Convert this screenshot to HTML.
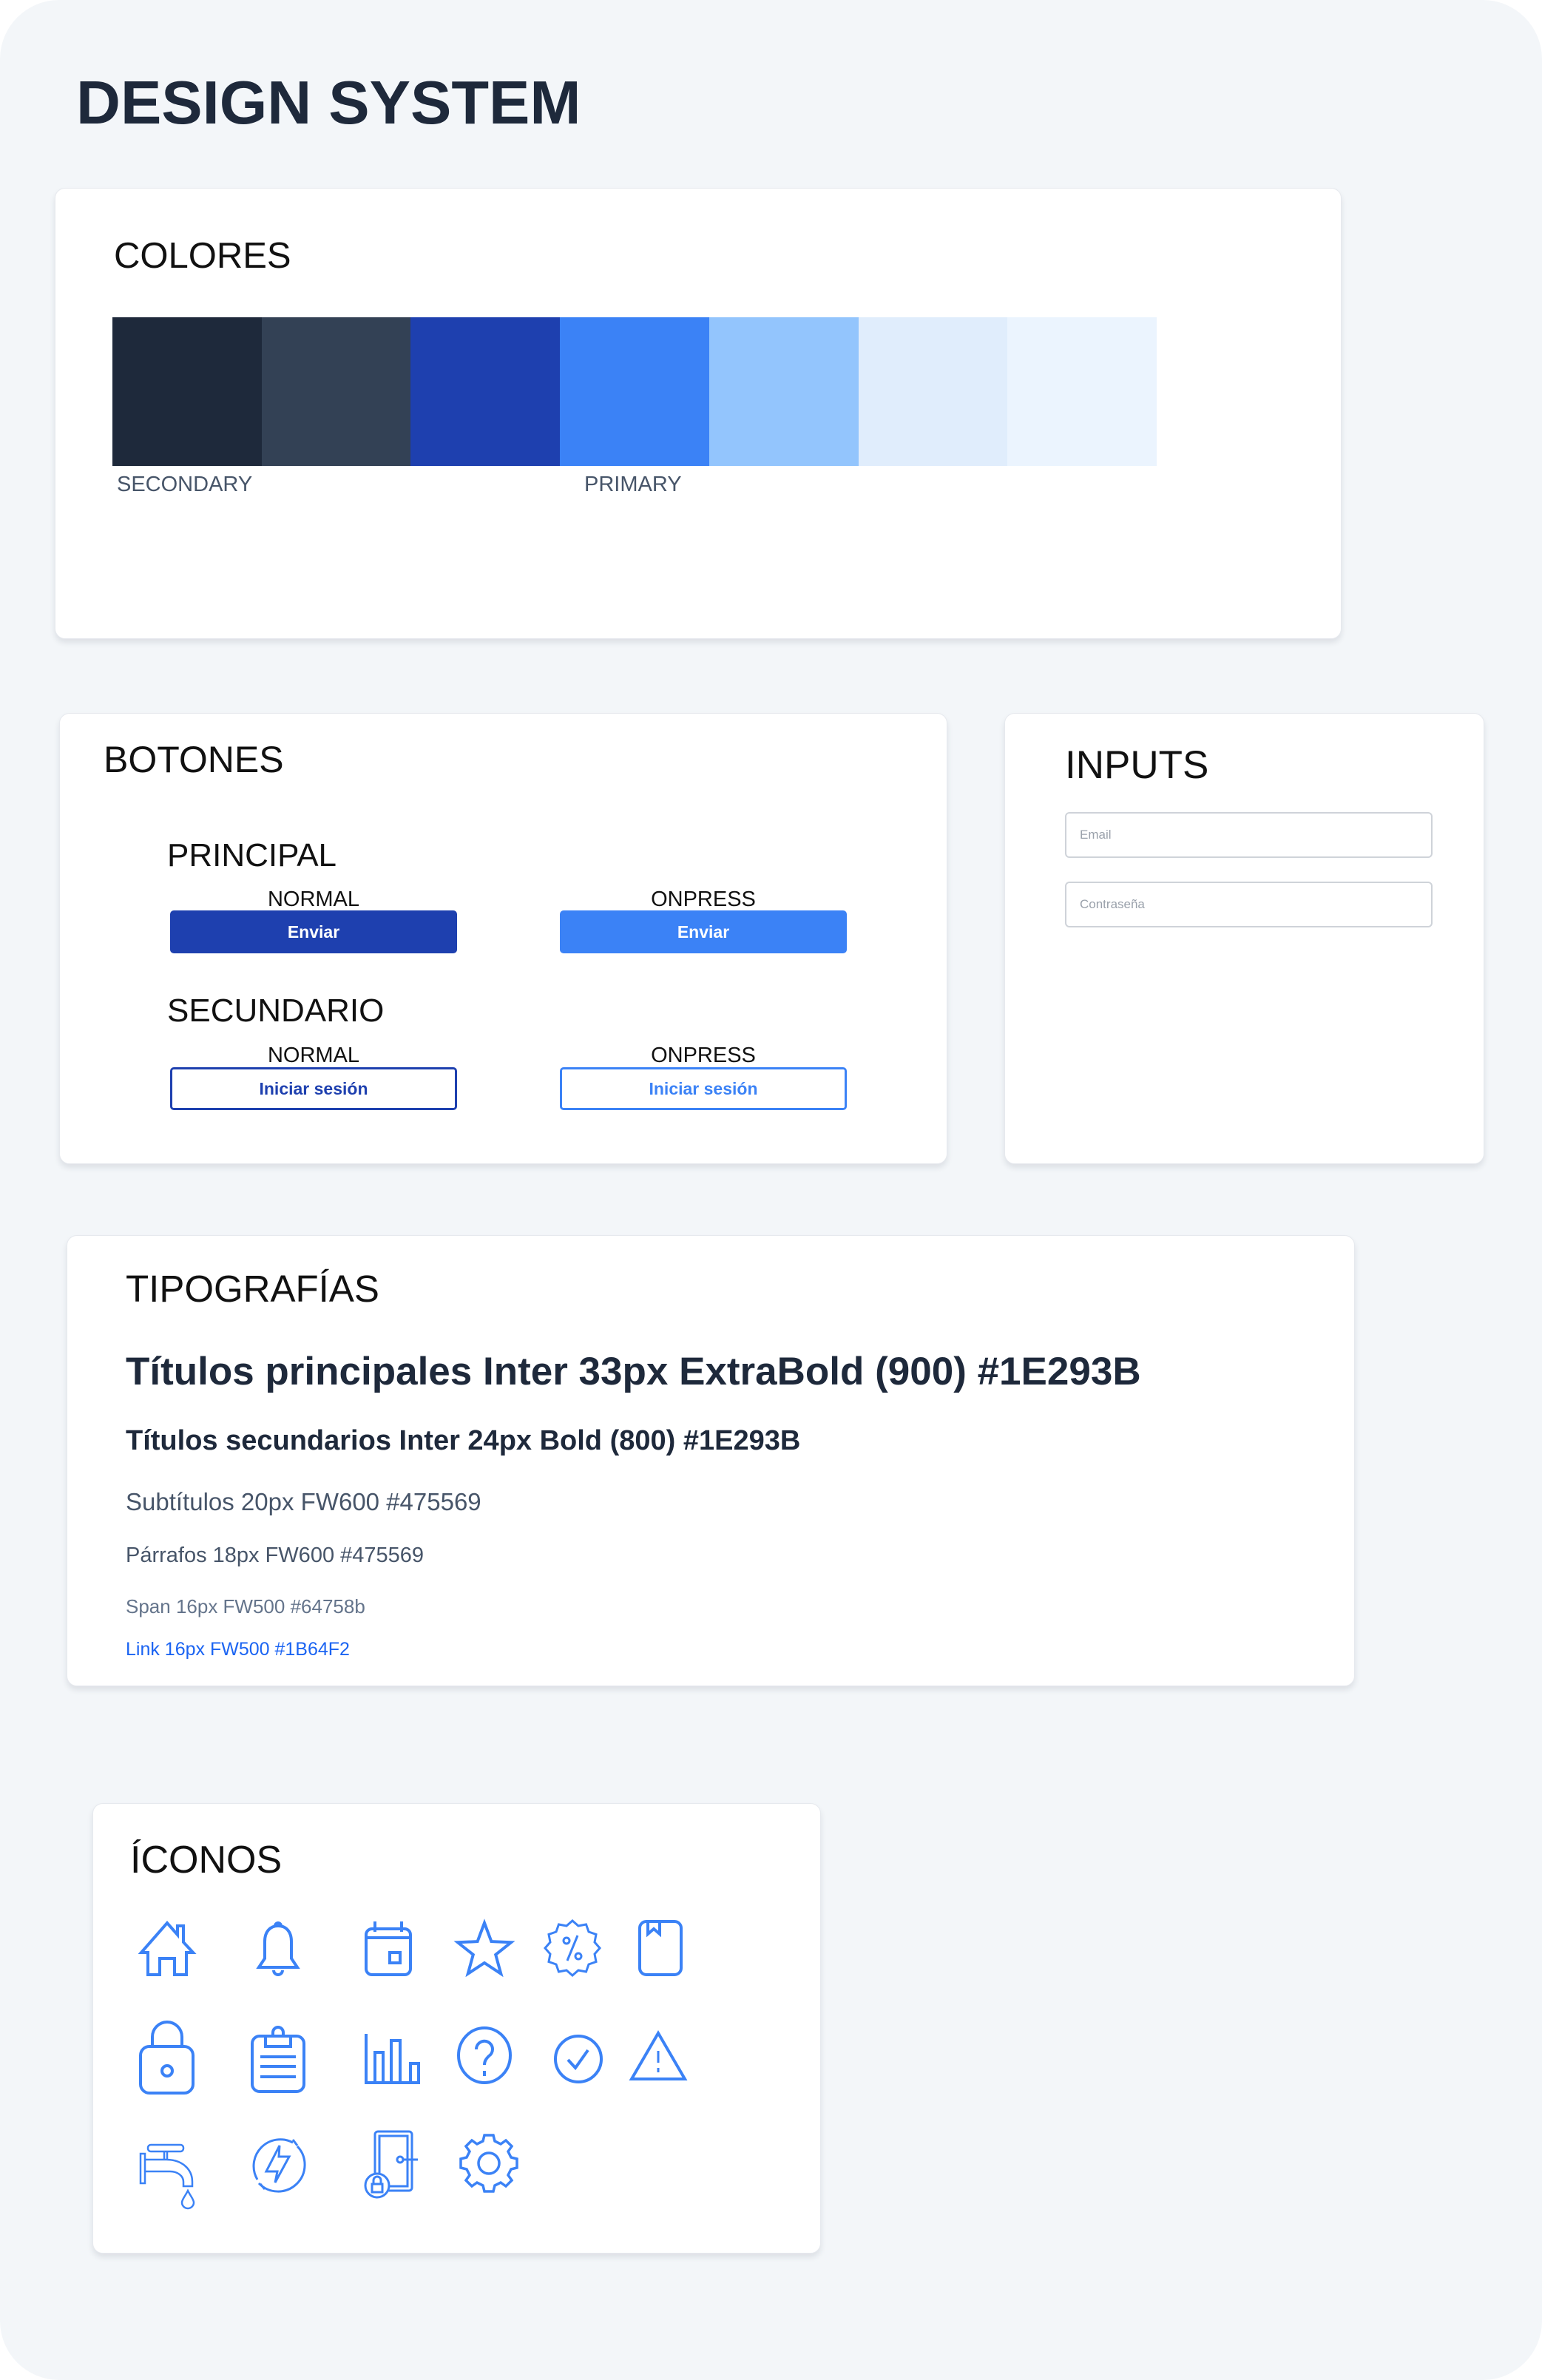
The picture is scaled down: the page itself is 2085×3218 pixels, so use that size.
<!DOCTYPE html>
<html><head><meta charset="utf-8"><style>
*{margin:0;padding:0;box-sizing:border-box}
body{width:2085px;height:3218px;background:#fff;font-family:"Liberation Sans",sans-serif;position:relative;overflow:hidden}
.page{position:absolute;left:0;top:0;width:2085px;height:3218px;background:#f3f6f9;border-radius:80px}
.card{position:absolute;background:#fff;border-radius:14px;border:1px solid #e6e9ee;box-shadow:0 5px 8px rgba(30,41,59,.10)}
.t{position:absolute;line-height:1;white-space:nowrap}
.h{font-size:50px;color:#111}
.btn{position:absolute;width:388px;height:58px;border-radius:5px;font-weight:bold;font-size:23px;display:flex;align-items:center;justify-content:center}
.lbl{position:absolute;font-size:29px;color:#111;line-height:1;width:388px;text-align:center}
.inp{position:absolute;left:1440px;width:497px;height:62px;border:2px solid #cfd3d9;border-radius:6px;font-size:17px;color:#9aa1ab;padding-left:18px;display:flex;align-items:center}
</style></head><body>
<div class="page"></div>
<div class="t" style="left:103px;top:97px;font-size:83px;font-weight:bold;color:#1e293b">DESIGN SYSTEM</div>

<div class="card" style="left:74px;top:254px;width:1740px;height:610px"></div>
<div class="t h" style="left:154px;top:322px;font-size:49px">COLORES</div>
<div style="position:absolute;left:152px;top:429px;height:201px;width:1412px;display:flex">
<div style="flex:1;background:#1e293b"></div><div style="flex:1;background:#334155"></div><div style="flex:1;background:#1e40af"></div><div style="flex:1;background:#3b82f6"></div><div style="flex:1;background:#93c5fd"></div><div style="flex:1;background:#e0edfc"></div><div style="flex:1;background:#ebf4fe"></div>
</div>
<div class="t" style="left:158px;top:641px;font-size:29px;color:#475569">SECONDARY</div>
<div class="t" style="left:790px;top:641px;font-size:29px;color:#475569">PRIMARY</div>

<div class="card" style="left:80px;top:964px;width:1201px;height:610px"></div>
<div class="t h" style="left:140px;top:1002px">BOTONES</div>
<div class="t" style="left:226px;top:1135px;font-size:44px;color:#111">PRINCIPAL</div>
<div class="lbl" style="left:230px;top:1202px">NORMAL</div>
<div class="lbl" style="left:757px;top:1202px">ONPRESS</div>
<div class="btn" style="left:230px;top:1231px;background:#1e40af;color:#fff">Enviar</div>
<div class="btn" style="left:757px;top:1231px;background:#3b82f6;color:#fff">Enviar</div>
<div class="t" style="left:226px;top:1345px;font-size:44px;color:#111">SECUNDARIO</div>
<div class="lbl" style="left:230px;top:1413px">NORMAL</div>
<div class="lbl" style="left:757px;top:1413px">ONPRESS</div>
<div class="btn" style="left:230px;top:1443px;border:3px solid #1e40af;color:#1e40af;background:#fff">Iniciar sesión</div>
<div class="btn" style="left:757px;top:1443px;border:3px solid #3b82f6;color:#3b82f6;background:#fff">Iniciar sesión</div>

<div class="card" style="left:1358px;top:964px;width:649px;height:610px"></div>
<div class="t" style="left:1440px;top:1008px;font-size:53px;color:#111">INPUTS</div>
<div class="inp" style="top:1098px">Email</div>
<div class="inp" style="top:1192px">Contraseña</div>

<div class="card" style="left:90px;top:1670px;width:1742px;height:610px"></div>
<div class="t h" style="left:170px;top:1717px;font-size:51px">TIPOGRAFÍAS</div>
<div class="t" style="left:170px;top:1828px;font-size:53px;font-weight:bold;color:#1e293b">Títulos principales Inter 33px ExtraBold (900) #1E293B</div>
<div class="t" style="left:170px;top:1929px;font-size:38px;font-weight:bold;color:#1e293b">Títulos secundarios Inter 24px Bold (800) #1E293B</div>
<div class="t" style="left:170px;top:2014px;font-size:33px;color:#475569">Subtítulos 20px FW600 #475569</div>
<div class="t" style="left:170px;top:2089px;font-size:29px;color:#475569">Párrafos 18px FW600 #475569</div>
<div class="t" style="left:170px;top:2159px;font-size:26px;color:#64748b">Span 16px FW500 #64758b</div>
<div class="t" style="left:170px;top:2218px;font-size:25px;color:#1b64f2">Link 16px FW500 #1B64F2</div>

<div class="card" style="left:125px;top:2438px;width:985px;height:609px"></div>
<div class="t" style="left:176px;top:2489px;font-size:52px;color:#111">ÍCONOS</div>

<svg style="position:absolute;left:0;top:0" width="2085" height="3218" fill="none" stroke="#3b82f6" stroke-width="4" stroke-linejoin="miter">
<path d="M200 2670 V2640 H191 L226 2600 L240 2616 V2604 H248 V2626 L261 2640 H252 V2670 H236 V2648 H216 V2670 Z"/>
<path d="M372 2604 a4 4 0 0 1 8 0"/>
<path d="M350 2660 L358 2648 V2625 C358 2611 366 2604 376 2604 C386 2604 394 2611 394 2625 V2648 L402 2660 Z"/>
<path d="M370 2664 a6 6 0 0 0 12 0"/>
<rect x="495" y="2608" width="60" height="62" rx="8"/>
<path d="M507 2598 V2612 M543 2598 V2612 M495 2620 H555"/>
<rect x="527" y="2640" width="14" height="14"/>
<polygon points="655,2600 664.4,2625.1 691.1,2626.3 670.2,2642.9 677.3,2668.7 655,2654 632.7,2668.7 639.8,2642.9 618.9,2626.3 645.6,2625.1"/>
<polygon stroke-width="3" points="811,2634 804,2642 806,2652.5 796,2656 792.5,2666 782,2664 774,2671 766,2664 755.5,2666 752,2656 742,2652.5 744,2642 737,2634 744,2626 742,2615.5 752,2612 755.5,2602 766,2604 774,2597 782,2604 792.5,2602 796,2612 806,2615.5 804,2626"/>
<path stroke-width="3" d="M767 2651 L781 2617"/>
<circle stroke-width="3" cx="766" cy="2624" r="4"/>
<circle stroke-width="3" cx="782" cy="2645" r="4"/>
<rect x="865" y="2598" width="56" height="72" rx="9"/>
<path d="M876 2598 V2615 L884 2608 L892 2615 V2598"/>
<path d="M206 2768 V2754 a20 20 0 0 1 40 0 V2768"/>
<rect x="190" y="2767" width="71" height="63" rx="12"/>
<circle cx="226" cy="2800" r="7"/>
<rect x="341" y="2753" width="70" height="75" rx="10"/>
<path d="M359 2753 V2767 H393 V2753 M369 2753 V2748 a7 7 0 0 1 14 0 V2753"/>
<path d="M352 2781 H400 M352 2794 H400 M352 2808 H400"/>
<path d="M495 2750 V2816 H568"/>
<rect x="507" y="2775" width="11" height="41"/>
<rect x="529" y="2759" width="12" height="57"/>
<rect x="555" y="2790" width="11" height="26"/>
<ellipse cx="655" cy="2779" rx="35" ry="37"/>
<path d="M644 2771 a11 11 0 1 1 17 9 c-4 4 -6 7 -6 12 M655 2800 V2807"/>
<circle cx="782" cy="2784" r="31"/>
<path d="M768 2785 L778 2796 L795 2772"/>
<path d="M890 2749 L926 2811 H854 Z"/>
<path stroke-width="3" d="M890 2773 V2789 M890 2796 V2802"/>
<g stroke-width="2.5">
<rect x="200" y="2900" width="48" height="9" rx="4"/>
<path d="M222 2909 V2920 M226 2909 V2920"/>
<rect x="190" y="2912" width="6" height="40"/>
<path d="M196 2920 H225 C245 2920 260 2932 260 2950 V2956 H248 V2950 C248 2942 240 2936 230 2936 H196"/>
<path d="M254 2962 C258 2970 262 2974 262 2978 a8 8 0 0 1 -16 0 C246 2974 250 2970 254 2962 Z"/>
</g>
<g stroke-width="3">
<path d="M402 2902 A36 36 0 0 1 350 2952"/>
<path d="M348 2947 A36 36 0 0 1 396 2897"/>
<path d="M378 2901 L360 2936 H375 L372 2951 L391 2916 H377 Z"/>
<path d="M396 2893 l6 8 M352 2953 l6 7"/>
</g>
<g stroke-width="3">
<rect x="507" y="2882" width="50" height="80" rx="4"/>
<rect x="513" y="2888" width="38" height="68"/>
<circle cx="541" cy="2920" r="4"/>
<path d="M545 2920 H565"/>
<circle cx="510" cy="2955" r="16" fill="#fff"/>
<rect x="503" y="2953" width="14" height="11"/>
<path d="M505 2953 V2948 a5 5 0 0 1 10 0 V2953"/>
</g>
<g stroke-width="3.5">
<path d="M655 2887 H667 L669 2895 L677 2899 L684 2894 L692 2902 L687 2909 L691 2917 L699 2919 V2931 L691 2933 L687 2941 L692 2948 L684 2956 L677 2951 L669 2955 L667 2963 H655 L653 2955 L645 2951 L638 2956 L630 2948 L635 2941 L631 2933 L623 2931 V2919 L631 2917 L635 2909 L630 2902 L638 2894 L645 2899 L653 2895 Z"/>
<circle cx="661" cy="2925" r="14"/>
</g>
</svg>
</body></html>
